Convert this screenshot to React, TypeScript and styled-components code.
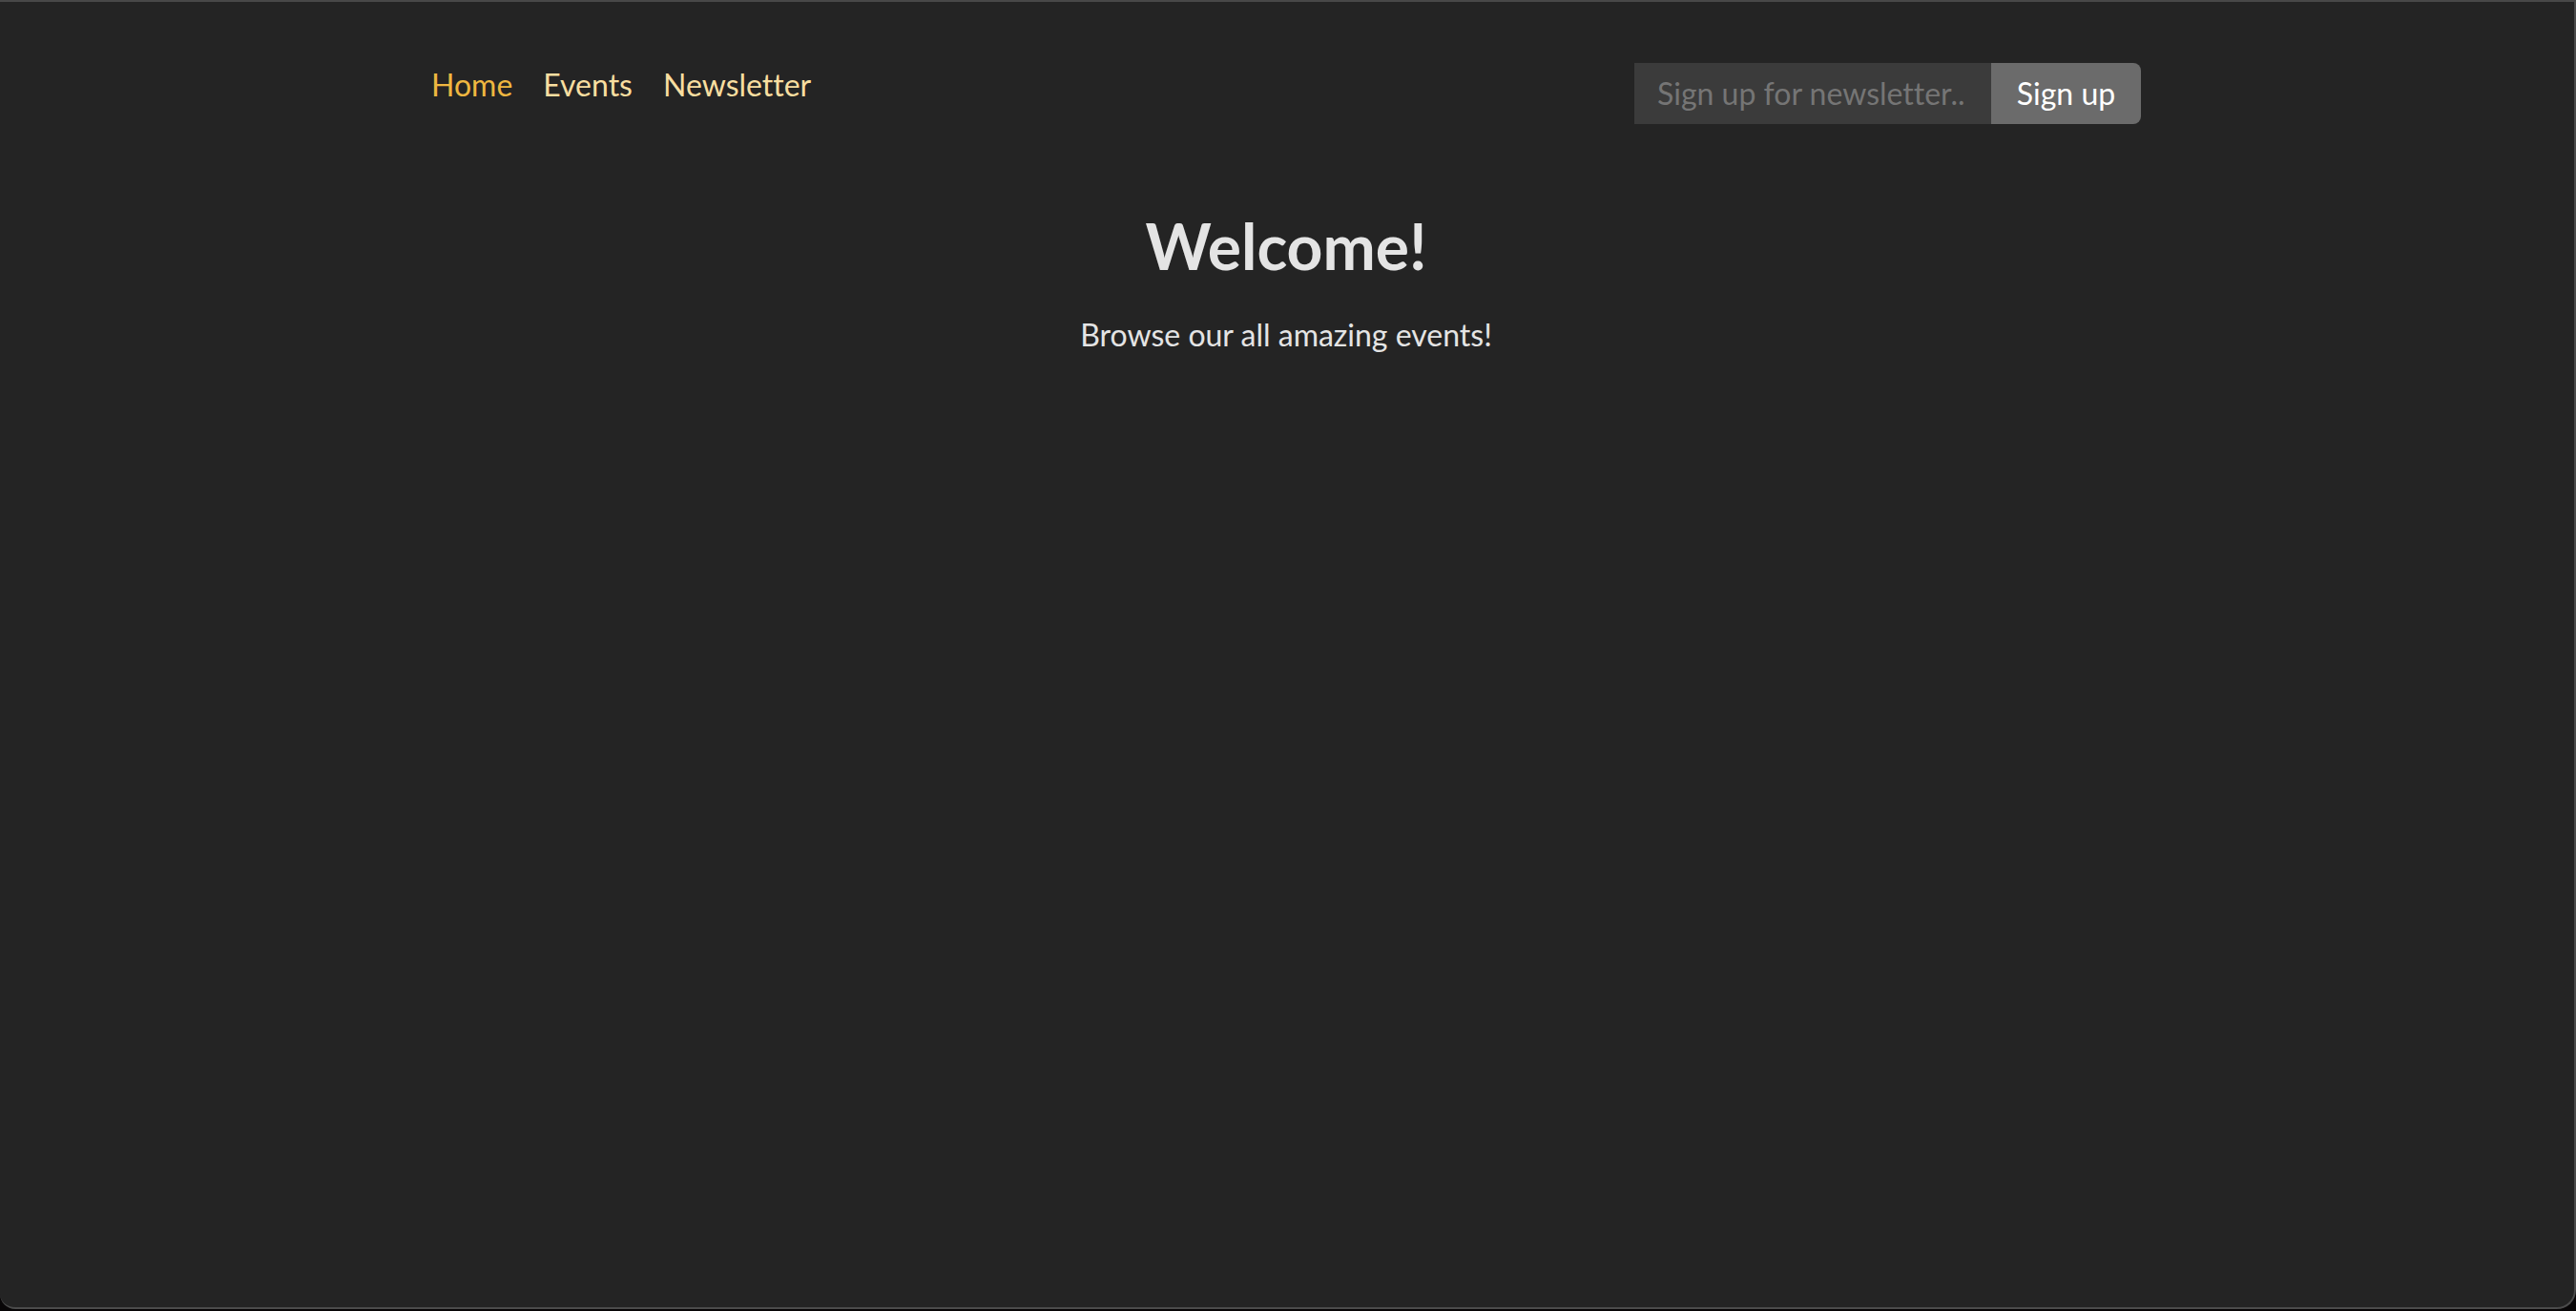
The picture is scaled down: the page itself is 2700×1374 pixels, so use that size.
import React from 'react';
import styled, { createGlobalStyle } from 'styled-components';

const GlobalStyle = createGlobalStyle`
  *, *::before, *::after { box-sizing: border-box; }
  html, body { margin: 0; background: #080607; }
  body, input, button {
    font-family: Avenir, Lato, "Open Sans", sans-serif;
    font-size: 32px;
    font-weight: 400;
    line-height: 46px;
    font-variant-ligatures: none;
  }
`;

const Screen = styled.div`
  min-height: 100vh;
  display: flex;
  padding-bottom: 2px;
`;

const Window = styled.div`
  flex: 1;
  padding-right: 2px;
  background: #242424;
  color: #e4e4e4;
  border: 2px solid #4b4b4b;
  border-left: 0;
  border-radius: 0 0 20px 16px;
  border-top-color: #484848;
`;

const Header = styled.header`
  width: 100%;
  max-width: 1792px;
  margin: 0 auto;
  padding: 64px 0 0;
  display: flex;
  justify-content: space-between;
  align-items: flex-start;
`;

const NavList = styled.ul`
  list-style: none;
  margin: 0;
  padding: 0;
  display: flex;
  gap: 32px;
`;

const NavLink = styled.a<{ $active?: boolean }>`
  color: ${(p) => (p.$active ? '#efb740' : '#f8dea0')};
  text-decoration: none;
`;

const Form = styled.form`
  display: flex;
  height: 64px;
`;

const EmailInput = styled.input`
  width: 374px;
  padding: 8px 24px;
  border: 0;
  border-radius: 0;
  background: #3b3b3b;
  color: #e4e4e4;
  &::placeholder { color: #757575; opacity: 1; }
`;

const SubmitButton = styled.button`
  width: 157px;
  padding: 8px 0;
  border: 0;
  border-radius: 0 8px 8px 0;
  background: #6b6b6b;
  color: #ffffff;
  cursor: pointer;
`;

const Main = styled.main`
  padding: 84px 32px 64px;
  text-align: center;
`;

const Title = styled.h1`
  margin: 0;
  font-size: 66px;
  font-weight: 700;
  line-height: 88px;
`;

const Lead = styled.p`
  margin: 26px 0 0;
`;

export default function App() {
  return (
    <>
      <GlobalStyle />
      <Screen>
        <Window>
          <Header>
            <nav>
              <NavList>
                <li><NavLink href="#home" $active aria-current="page">Home</NavLink></li>
                <li><NavLink href="#events">Events</NavLink></li>
                <li><NavLink href="#newsletter">Newsletter</NavLink></li>
              </NavList>
            </nav>
            <Form onSubmit={(e) => e.preventDefault()}>
              <EmailInput type="email" placeholder="Sign up for newsletter.." aria-label="Sign up for newsletter" />
              <SubmitButton type="submit">Sign up</SubmitButton>
            </Form>
          </Header>
          <Main>
            <Title>Welcome!</Title>
            <Lead>Browse our all amazing events!</Lead>
          </Main>
        </Window>
      </Screen>
    </>
  );
}
